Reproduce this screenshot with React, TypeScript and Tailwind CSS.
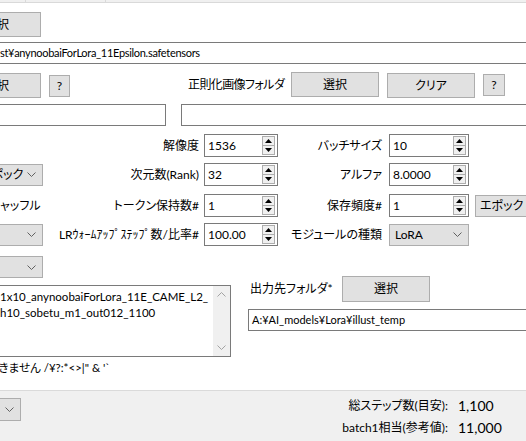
import React from 'react';

function Chevron() {
  return (
    <svg width="9" height="5" viewBox="0 0 9 5" className="shrink-0">
      <polyline points="0.5,0.5 4.5,4.5 8.5,0.5" fill="none" stroke="#606060" strokeWidth="1" />
    </svg>
  );
}

function Tri({ up }: { up?: boolean }) {
  return (
    <svg width="7" height="4" viewBox="0 0 7 4">
      <polygon points={up ? '0,4 7,4 3.5,0' : '0,0 7,0 3.5,4'} fill="#000" />
    </svg>
  );
}

function Btn({ label, className }: { label: string; className: string }) {
  return (
    <div className={`flex shrink-0 items-center justify-center border border-[#adadad] bg-[#e1e1e1] ${className}`}>
      {label}
    </div>
  );
}

function Combo({ text, className }: { text?: string; className: string }) {
  return (
    <div className={`flex shrink-0 items-center justify-between border border-[#adadad] bg-[#e1e1e1] pl-[5px] pr-[6px] ${className}`}>
      <span className="whitespace-nowrap">{text}</span>
      <Chevron />
    </div>
  );
}

function NumBox({ value, className }: { value: string; className: string }) {
  return (
    <div className={`flex h-[23px] shrink-0 items-center border border-[#7a7a7a] bg-white pl-[3px] pr-[2px] ${className}`}>
      <span className="flex-1">{value}</span>
      <div className="flex h-[19px] w-[13px] flex-col border border-[#adadad] bg-[#f0f0f0]">
        <div className="flex flex-1 items-center justify-center border-b border-[#adadad]">
          <Tri up />
        </div>
        <div className="flex flex-1 items-center justify-center">
          <Tri />
        </div>
      </div>
    </div>
  );
}

function Label({ text, className }: { text: string; className: string }) {
  return <div className={`flex shrink-0 items-center justify-end whitespace-nowrap ${className}`}>{text}</div>;
}

export default function App() {
  return (
    <div className="relative flex h-[441px] w-[526px] flex-col overflow-hidden bg-white font-['Lato','Noto_Sans_CJK_JP',sans-serif] text-[12px] leading-[16px] text-black [font-feature-settings:'palt']">
      {/* tab strip */}
      <div className="flex h-[3px] shrink-0 border-b border-[#d9d9d9] bg-[#f0f0f0]">
        <div className="w-[26px] border-r border-[#d9d9d9]" />
        <div className="w-[80px] border-r border-[#d9d9d9]" />
      </div>

      {/* base model */}
      <div className="mt-[9px] flex">
        <Btn label="選択" className="ml-[-47px] h-[25px] w-[88px]" />
      </div>
      <div className="mt-[5px] flex h-[22px] w-[540px] items-center border-y border-[#7a7a7a] text-[11px] tracking-[-0.3px] whitespace-nowrap">
        st¥anynoobaiForLora_11Epsilon.safetensors
      </div>

      {/* train / reg folders */}
      <div className="mt-[8px] flex h-[26px] items-start">
        <Btn label="選択" className="ml-[-47px] mt-[1px] h-[25px] w-[88px]" />
        <Btn label="?" className="ml-[8px] mt-[3px] h-[22px] w-[21px]" />
        <div className="ml-[118px] mt-[5px] w-[100px] shrink-0 whitespace-nowrap tracking-[-0.6px]">正則化画像フォルダ</div>
        <Btn label="選択" className="ml-[3px] h-[25px] w-[88px]" />
        <Btn label="クリア" className="ml-[8px] mt-[1px] h-[25px] w-[88px]" />
        <Btn label="?" className="ml-[8px] mt-[2px] h-[22px] w-[22px]" />
      </div>
      <div className="mt-[6px] flex h-[22px]">
        <div className="ml-[-10px] h-[22px] w-[176px] shrink-0 border border-[#7a7a7a]" />
        <div className="ml-[15px] h-[22px] w-[360px] shrink-0 border border-[#7a7a7a]" />
      </div>

      {/* parameters */}
      <div className="mt-[8px] flex h-[23px] items-center">
        <div className="w-[43px] shrink-0" />
        <Label text="解像度" className="mr-[5px] w-[156px]" />
        <NumBox value="1536" className="w-[74px]" />
        <Label text="バッチサイズ" className="mr-[7px] w-[104px]" />
        <NumBox value="10" className="w-[80px]" />
      </div>
      <div className="mt-[6px] flex h-[23px] items-center">
        <Combo text="エポック" className="ml-[-26px] h-[22px] w-[69px]" />
        <Label text="次元数(Rank)" className="mr-[5px] w-[156px]" />
        <NumBox value="32" className="w-[74px]" />
        <Label text="アルファ" className="mr-[7px] w-[104px]" />
        <NumBox value="8.0000" className="w-[80px]" />
      </div>
      <div className="mt-[8px] flex h-[23px] items-center">
        <div className="w-[43px] shrink-0 whitespace-nowrap">
          <span className="ml-[-11px]">シャッフル</span>
        </div>
        <Label text="トークン保持数#" className="mr-[5px] w-[156px]" />
        <NumBox value="1" className="w-[74px]" />
        <Label text="保存頻度#" className="mr-[7px] w-[104px]" />
        <NumBox value="1" className="w-[80px]" />
        <div className="ml-[6px] flex h-[22px] w-[70px] shrink-0 items-center border border-[#adadad] bg-[#e1e1e1] pl-[4px]">
          エポック
        </div>
      </div>
      <div className="mt-[6px] flex h-[23px] items-center">
        <Combo className="ml-[-40px] h-[22px] w-[83px]" />
        <Label text="LRｳｫｰﾑｱｯﾌﾟｽﾃｯﾌﾟ数/比率#" className="mr-[5px] w-[156px]" />
        <NumBox value="100.00" className="w-[74px]" />
        <Label text="モジュールの種類" className="mr-[7px] w-[104px]" />
        <Combo text="LoRA" className="h-[22px] w-[80px]" />
      </div>

      {/* output */}
      <div className="mt-[10px] flex">
        <div className="flex w-[231px] shrink-0 flex-col">
          <Combo className="ml-[-40px] h-[22px] w-[83px]" />
          <div className="mt-[7px] flex h-[72px] border-y border-r border-[#7a7a7a] text-[11.5px]">
            <div className="min-w-0 flex-1 overflow-hidden pt-[3px] leading-[16px] whitespace-nowrap">
              <div>1x10_anynoobaiForLora_11E_CAME_L2_</div>
              <div>h10_sobetu_m1_out012_1100</div>
            </div>
            <div className="flex w-[17px] shrink-0 flex-col items-center justify-between bg-[#f0f0f0] py-[6px]">
              <svg width="9" height="5" viewBox="0 0 9 5">
                <polyline points="0.5,4.5 4.5,0.5 8.5,4.5" fill="none" stroke="#a3a3a3" />
              </svg>
              <svg width="9" height="5" viewBox="0 0 9 5">
                <polyline points="0.5,0.5 4.5,4.5 8.5,0.5" fill="none" stroke="#a3a3a3" />
              </svg>
            </div>
          </div>
          <div className="mt-[3px] whitespace-nowrap text-[11.5px]">
            <span className="ml-[-12px]">できません /¥?:*&lt;&gt;|" &amp; '`</span>
          </div>
        </div>
        <div className="ml-[17px] flex flex-1 flex-col">
          <div className="mt-[20px] flex h-[26px] items-center">
            <span className="ml-[2px] w-[92px] shrink-0 whitespace-nowrap">出力先フォルダ*</span>
            <Btn label="選択" className="h-[26px] w-[88px]" />
          </div>
          <div className="mt-[7px] flex h-[22px] w-[300px] items-center border border-[#7a7a7a] pl-[3px] text-[11px] whitespace-nowrap">
            A:¥AI_models¥Lora¥illust_temp
          </div>
        </div>
      </div>

      {/* status panel */}
      <div className="mt-auto flex h-[51px] shrink-0 border-t border-[#dadada] bg-[#f0f0f0]">
        <Combo className="ml-[-40px] mt-[7px] h-[23px] w-[61px]" />
        <div className="ml-auto mr-[18px] mt-[7px] flex flex-col gap-[6px]">
          <div className="flex h-[16px] items-center">
            <span className="w-[130px] shrink-0 text-right whitespace-nowrap">総ステップ数(目安):</span>
            <span className="ml-[10px] w-[50px] text-[14px]">1,100</span>
          </div>
          <div className="flex h-[16px] items-center">
            <span className="w-[130px] shrink-0 text-right whitespace-nowrap">batch1相当(参考値):</span>
            <span className="ml-[10px] w-[50px] text-[14px]">11,000</span>
          </div>
        </div>
      </div>
    </div>
  );
}
